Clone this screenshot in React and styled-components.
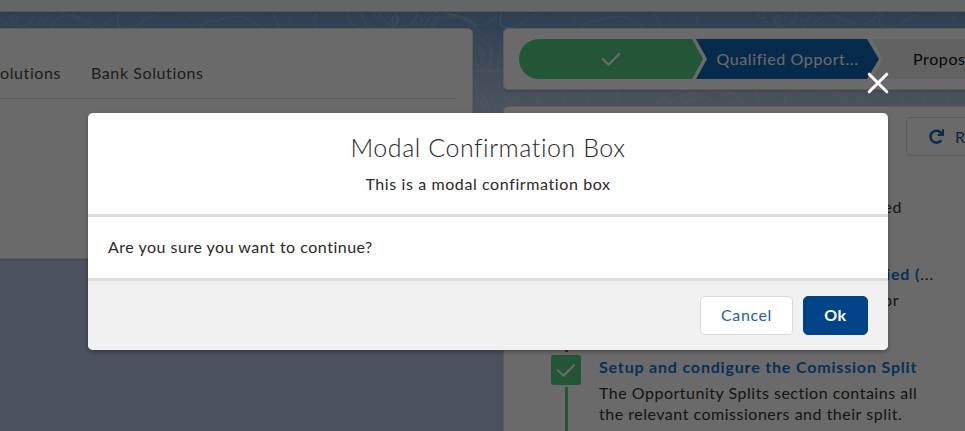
import React from "react";
import styled, { createGlobalStyle } from "styled-components";

const Global = createGlobalStyle`
  * { box-sizing: border-box; }
  html, body { margin: 0; overflow: hidden; }
  body { font: 400 16px/21px Lato, "Open Sans", sans-serif; letter-spacing: .5px; color: #2b2826; background: #b0c4df; }
  h2, p { margin: 0; }
`;

const Page = styled.div`
  position: relative;
  display: flex;
  flex-direction: column;
  width: 965px;
  height: 431px;
  overflow: hidden;
  background: linear-gradient(#6a98c6 12px, #6f9bc9 28px, #98b3d6 70px, #b0c4df 110px);
`;
const Contours = styled.svg`
  position: absolute;
  inset: 0;
  width: 965px;
  height: 113px;
  fill: none;
  stroke: #fff;
  stroke-opacity: .14;
  stroke-width: 1.3;
`;
const TopBar = styled.header`
  flex: none;
  height: 12px;
  background: #f3f2f2;
  border-bottom: 1px solid #d0cfcd;
  box-shadow: 0 2px 4px rgba(0,0,0,.1);
  position: relative;
`;
const Columns = styled.main`
  display: flex;
  gap: 30px;
  padding-top: 16px;
  flex: 1;
  position: relative;
`;
const Card = styled.section`
  background: #fff;
  border: 1px solid #dddbda;
  border-radius: 5px;
  box-shadow: 0 2px 2px rgba(0,0,0,.1);
`;
const TabsCard = styled(Card)`
  width: 483px;
  height: 231px;
  margin-left: -10px;
  flex: none;
  padding: 0 16px 0 9px;
`;
const Tabs = styled.nav`
  display: flex;
  height: 70px;
  padding-top: 33px;
  border-bottom: 1px solid #dddbda;
  color: #3e3e3c;
`;
const Tab = styled.span`
  width: ${p => p.$w}px;
  white-space: nowrap;
  letter-spacing: .6px;
`;
const Side = styled.div`
  display: flex;
  flex-direction: column;
  gap: 16px;
  width: 472px;
  flex: none;
`;
const PathCard = styled(Card)`
  display: flex;
  height: 62px;
  padding: 10px 0 0 15px;
`;
const Stage = styled.div`
  flex: none;
  display: flex;
  align-items: center;
  justify-content: ${p => (p.$upcoming ? "flex-start" : "center")};
  height: 40px;
  width: ${p => p.$w}px;
  padding: 0 0 ${p => (p.$first ? 0 : 2)}px ${p => (p.$upcoming ? 41 : 0)}px;
  margin-right: -7px;
  background: ${p => p.$bg};
  color: ${p => p.$fg || "#fff"};
  border-radius: ${p => (p.$first ? "20px 0 0 20px" : 0)};
  clip-path: ${p => p.$first
    ? "polygon(0 0, calc(100% - 11px) 0, 100% 50%, calc(100% - 11px) 100%, 0 100%)"
    : "polygon(0 0, calc(100% - 12px) 0, 100% 50%, calc(100% - 12px) 100%, 0 100%, 11px 50%)"};
  letter-spacing: .6px;
  white-space: nowrap;
`;
const GuideCard = styled(Card)`
  height: 360px;
  padding: 10px 0 0 47px;
  display: flex;
  flex-direction: column;
`;
const RefreshButton = styled.button`
  flex: none;
  display: flex;
  align-items: center;
  gap: 10px;
  width: 130px;
  height: 39px;
  margin-left: 355px;
  padding: 0 0 0 21px;
  background: #fff;
  border: 1px solid #dddbda;
  border-radius: 5px;
  color: #0b5cab;
  font: inherit;
  letter-spacing: inherit;
`;
const Step = styled.article`
  display: grid;
  flex: none;
  grid-template-columns: 30px 335px;
  column-gap: 18px;
  height: ${p => p.$h}px;
`;
const Rail = styled.div`
  display: flex;
  flex-direction: column;
  align-items: center;
  gap: 2px;
  padding-bottom: 3px;
`;
const Badge = styled.span`
  display: flex;
  align-items: center;
  justify-content: center;
  flex: none;
  width: 30px;
  height: 30px;
  border-radius: 3px;
  background: #4bca81;
`;
const Line = styled.span`
  flex: 1;
  width: 3px;
  background: ${p => p.$color};
`;
const StepText = styled.div`
  padding-top: ${p => p.$pt ?? 1}px;
  white-space: nowrap;
  letter-spacing: .51px;
`;
const StepTitle = styled.div`
  width: ${p => (p.$clipped ? "335px" : "auto")};
  display: flex;
  justify-content: ${p => (p.$clipped ? "flex-end" : "flex-start")};
  margin-bottom: 5px;
  letter-spacing: .82px;
`;
const StepLink = styled.b`
  color: #0070d2;
  font-weight: 700;
`;
const StepLine = styled.div`
  width: ${p => p.$w}px;
  text-align: right;
`;
const Backdrop = styled.div`
  position: absolute;
  inset: 0;
  background: rgba(8,7,7,.6);
`;
const Modal = styled.div`
  position: absolute;
  left: 88px;
  top: 113px;
  width: 800px;
  height: 237px;
  display: flex;
  flex-direction: column;
  border-radius: 5px;
  background: #fff;
  box-shadow: 0 2px 4px rgba(0,0,0,.3);
`;
const Close = styled.svg`
  position: absolute;
  right: -1px;
  top: -41px;
  width: 22px;
  height: 22px;
`;
const ModalHead = styled.header`
  height: 104px;
  padding-top: 19px;
  border-bottom: 3px solid #dddbda;
  text-align: center;
`;
const Title = styled.h2`
  font-weight: 300;
  font-size: 25px;
  line-height: 31px;
  letter-spacing: .55px;
`;
const Tagline = styled.p`
  margin-top: 10px;
  letter-spacing: .6px;
`;
const ModalBody = styled.div`
  height: 61px;
  padding: 19px 20px;
  letter-spacing: .5px;
`;
const ModalFoot = styled.footer`
  flex: 1;
  display: flex;
  justify-content: flex-end;
  gap: 10px;
  padding: 15px 20px;
  border-top: 3px solid #dddbda;
  border-radius: 0 0 5px 5px;
  background: #f1f1f1;
`;
const Button = styled.button`
  width: ${p => p.$w}px;
  height: 39px;
  padding: 0 0 2px;
  border: 1px solid ${p => (p.$brand ? "#004487" : "#dddbda")};
  border-radius: 5px;
  background: ${p => (p.$brand ? "#004487" : "#fff")};
  color: ${p => (p.$brand ? "#fff" : "#27609f")};
  font: inherit;
  font-weight: ${p => (p.$brand ? 700 : 400)};
  letter-spacing: .6px;
`;

const Check = ({ w = 20 }) => (
  <svg width={w} height={w * 0.75} viewBox="0 0 20 15" fill="none" stroke="#fff" strokeWidth="2.2" strokeLinecap="round" strokeLinejoin="round">
    <path d="M1.8 7.2 7.6 12.8 18.2 2" />
  </svg>
);

const ContourTile = () => (
  <g>
    <path d="M0 17q8 12 24 9q13-5 10-14M42 28q4-12 13-16M50 28q8-16 24-11q12 5 20 11M60 12q18 3 36 13q13 0 22-13M120 12q-6 15 4 16q12 0 22-9t24-7M200 28q4-8 16-7 21-9 33-1 8 4 13 8M270 12q8 7 9 16M318 28q-7-8 0-16" />
    <ellipse cx="14" cy="19" rx="3" ry="3.6" />
    <path d="M22 14l1 5M41 18l-2 5M188 15l6 5M290 22v-6" />
  </g>
);

export default function App() {
  return (
    <Page>
      <Global />
      <Contours viewBox="0 0 965 113">
        <ContourTile />
        <path d="M361 12q4 18 18 16h12q10-3 4-16M347 12q-1 11 12 16" />
        <g transform="translate(382)"><ContourTile /></g>
        <g transform="translate(762)"><ContourTile /></g>
        <path d="M430 28q5-15 18-14 23 2 30 17 13 5 14 22t-8 22M473 35q20 7 18 24-6 15-18 11M473 42q15 8 9 20-3 5-9 4M473 71h30M498 71q-2-16 6-24M473 79q19 7 22 34M473 85q13 10 17 28M473 95q11 6 12 18M503 85q-2 13 17 28M502 12q-5 17 8 16M514 90q0 10 15 16M532 90l9 16M561 90l4 16M590 90q-5 8-2 16M616 90q4 8 0 16M655 106q16-20 37-14M665 106q20-17 41-10M680 106q20-15 34-5M702 90q27 1 32 16M720 90q18 2 24 16M756 90l3 16M785 106q-4-9 8-16M820 90q25 0 31 16M858 90q0 8 15 16M897 90l9 16M921 90l4 16M950 90l-5 16" />
        <ellipse cx="377" cy="15" rx="3" ry="3" /><ellipse cx="395" cy="20" rx="3" ry="4" />
        <ellipse cx="761" cy="15" rx="3" ry="3" /><ellipse cx="778" cy="20" rx="3" ry="4" />
      </Contours>
      <TopBar />
      <Columns>
        <TabsCard>
          <Tabs>
            <Tab $w={91}>olutions</Tab>
            <Tab $w={120}>Bank Solutions</Tab>
          </Tabs>
        </TabsCard>
        <Side>
          <PathCard>
            <Stage $first $w={184} $bg="#4bca81"><Check /></Stage>
            <Stage $w={183} $bg="#005fb2">Qualified Opport...</Stage>
            <Stage $upcoming $w={185} $bg="#ecebea" $fg="#080707">Proposal</Stage>
          </PathCard>
          <GuideCard>
            <RefreshButton>
              <svg width="17" height="17" viewBox="0 0 17 17" fill="none" stroke="currentColor" strokeWidth="2.5">
                <path d="M13.3 12.2A6 6 0 1 1 12 3.8L14 6" /><path d="M15 1.2V7H9.8" strokeWidth="2" />
              </svg>
              Refresh
            </RefreshButton>
            <Step $h={106}>
              <Rail />
              <StepText $pt={40}><StepLine $w={303}>Activity is completed</StepLine></StepText>
            </Step>
            <Step $h={93}>
              <Rail><Badge /><Line $color="#c23934" /></Rail>
              <StepText>
                <StepTitle $clipped><StepLink>Ensure Opportunity is Qualified (</StepLink>...</StepTitle>
                <StepLine $w={300}>Review the qualification criteria for</StepLine>
              </StepText>
            </Step>
            <Step $h={100}>
              <Rail><Badge><Check /></Badge><Line $color="#4bca81" /></Rail>
              <StepText>
                <StepTitle><StepLink>Setup and condigure the Comission Split</StepLink></StepTitle>
                The Opportunity Splits section contains all<br />the relevant comissioners and their split.
              </StepText>
            </Step>
          </GuideCard>
        </Side>
      </Columns>
      <Backdrop />
      <Modal role="dialog">
        <Close viewBox="0 0 22 22" stroke="#fff" strokeWidth="3" strokeLinecap="round"><path d="M2.2 2.2 19.8 19.8M19.8 2.2 2.2 19.8" /></Close>
        <ModalHead>
          <Title>Modal Confirmation Box</Title>
          <Tagline>This is a modal confirmation box</Tagline>
        </ModalHead>
        <ModalBody>Are you sure you want to continue?</ModalBody>
        <ModalFoot>
          <Button $w={93}>Cancel</Button>
          <Button $w={65} $brand>Ok</Button>
        </ModalFoot>
      </Modal>
    </Page>
  );
}
